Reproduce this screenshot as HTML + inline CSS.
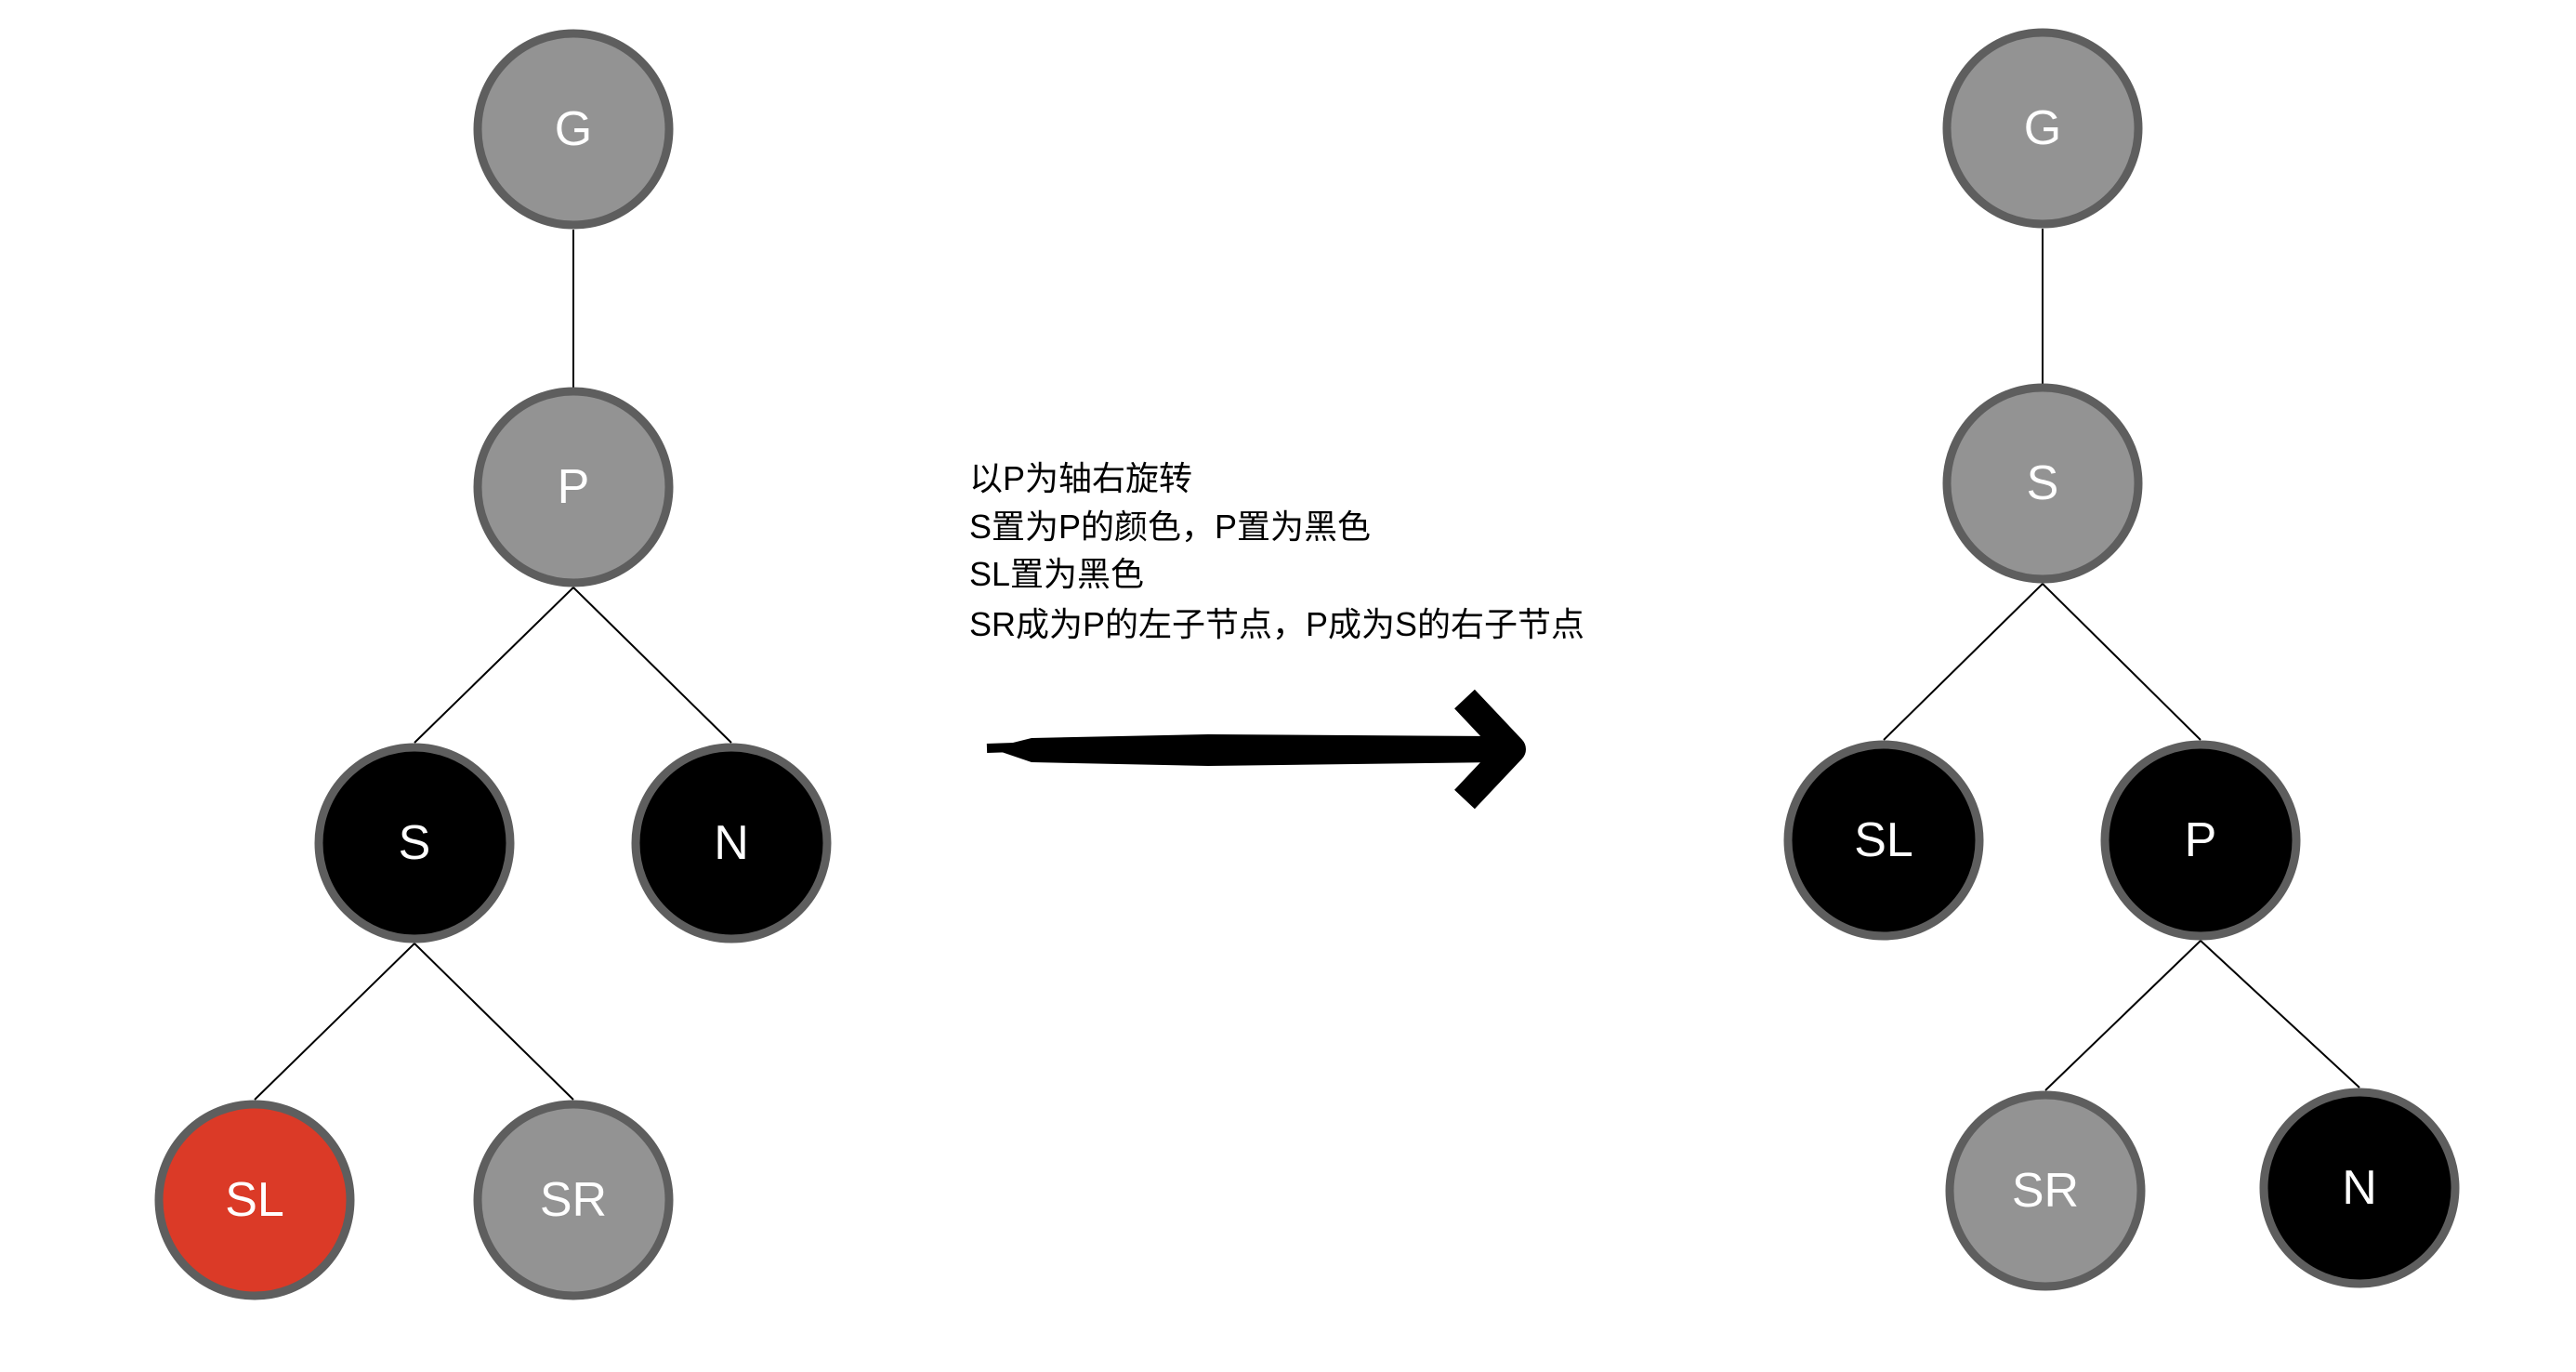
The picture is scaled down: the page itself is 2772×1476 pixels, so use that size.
<!DOCTYPE html>
<html><head><meta charset="utf-8"><style>
html,body{margin:0;padding:0;background:#fff;}
body{width:2772px;height:1476px;position:relative;overflow:hidden;}
svg{position:absolute;left:0;top:0;}
.t{position:absolute;left:1043px;font-family:"Liberation Sans","Noto Sans CJK SC",sans-serif;font-size:36px;color:#000;white-space:nowrap;line-height:52px;}
</style></head><body>
<svg width="2772" height="1476" viewBox="0 0 2772 1476">
<g transform="translate(-3,-1)">
<g stroke="#000" stroke-width="2">
<line x1="620" y1="248" x2="620" y2="420"/>
<line x1="620" y1="633" x2="449" y2="800"/>
<line x1="620" y1="633" x2="790" y2="800"/>
<line x1="449" y1="1016" x2="277" y2="1184"/>
<line x1="449" y1="1016" x2="620" y2="1184"/>
</g>
<g stroke="#5e5e5e" stroke-width="9">
<circle cx="620" cy="140" r="103" fill="#939393"/>
<circle cx="620" cy="525" r="103" fill="#939393"/>
<circle cx="449" cy="908" r="103" fill="#000"/>
<circle cx="790" cy="908" r="103" fill="#000"/>
<circle cx="277" cy="1292" r="103" fill="#db3a27"/>
<circle cx="620" cy="1292" r="103" fill="#939393"/>
</g>
<g fill="#fff" font-family="Liberation Sans, sans-serif" font-size="52" text-anchor="middle" dominant-baseline="central">
<text x="620" y="140">G</text>
<text x="620" y="525">P</text>
<text x="449" y="908">S</text>
<text x="790" y="908">N</text>
<text x="277" y="1292">SL</text>
<text x="620" y="1292">SR</text>
</g>
</g>
<g transform="translate(-11,-2)">
<g stroke="#000" stroke-width="2">
<line x1="2209" y1="248" x2="2209" y2="416"/>
<line x1="2209" y1="630" x2="2038" y2="798"/>
<line x1="2209" y1="630" x2="2379" y2="798"/>
<line x1="2379" y1="1014" x2="2212" y2="1175"/>
<line x1="2379" y1="1014" x2="2550" y2="1172"/>
</g>
<g stroke="#5e5e5e" stroke-width="9">
<circle cx="2209" cy="140" r="103" fill="#939393"/>
<circle cx="2209" cy="522" r="103" fill="#939393"/>
<circle cx="2038" cy="906" r="103" fill="#000"/>
<circle cx="2379" cy="906" r="103" fill="#000"/>
<circle cx="2212" cy="1283" r="103" fill="#939393"/>
<circle cx="2550" cy="1280" r="103" fill="#000"/>
</g>
<g fill="#fff" font-family="Liberation Sans, sans-serif" font-size="52" text-anchor="middle" dominant-baseline="central">
<text x="2209" y="140">G</text>
<text x="2209" y="522">S</text>
<text x="2038" y="906">SL</text>
<text x="2379" y="906">P</text>
<text x="2212" y="1283">SR</text>
<text x="2550" y="1280">N</text>
</g>
</g>
<path d="M1066 805 L1110 794 L1300 790 L1610 792 L1615 820 L1300 824 L1110 820 Z" fill="#000"/>
<path d="M1062 805 L1120 803" stroke="#000" stroke-width="10"/>
<path d="M1576 752 L1627 806 L1576 860" stroke="#000" stroke-width="30" fill="none" stroke-linejoin="round"/>
</svg>
<div class="t" style="top:489px">以P为轴右旋转</div>
<div class="t" style="top:541px">S置为P的颜色，P置为黑色</div>
<div class="t" style="top:592px">SL置为黑色</div>
<div class="t" style="top:646px">SR成为P的左子节点，P成为S的右子节点</div>
</body></html>
